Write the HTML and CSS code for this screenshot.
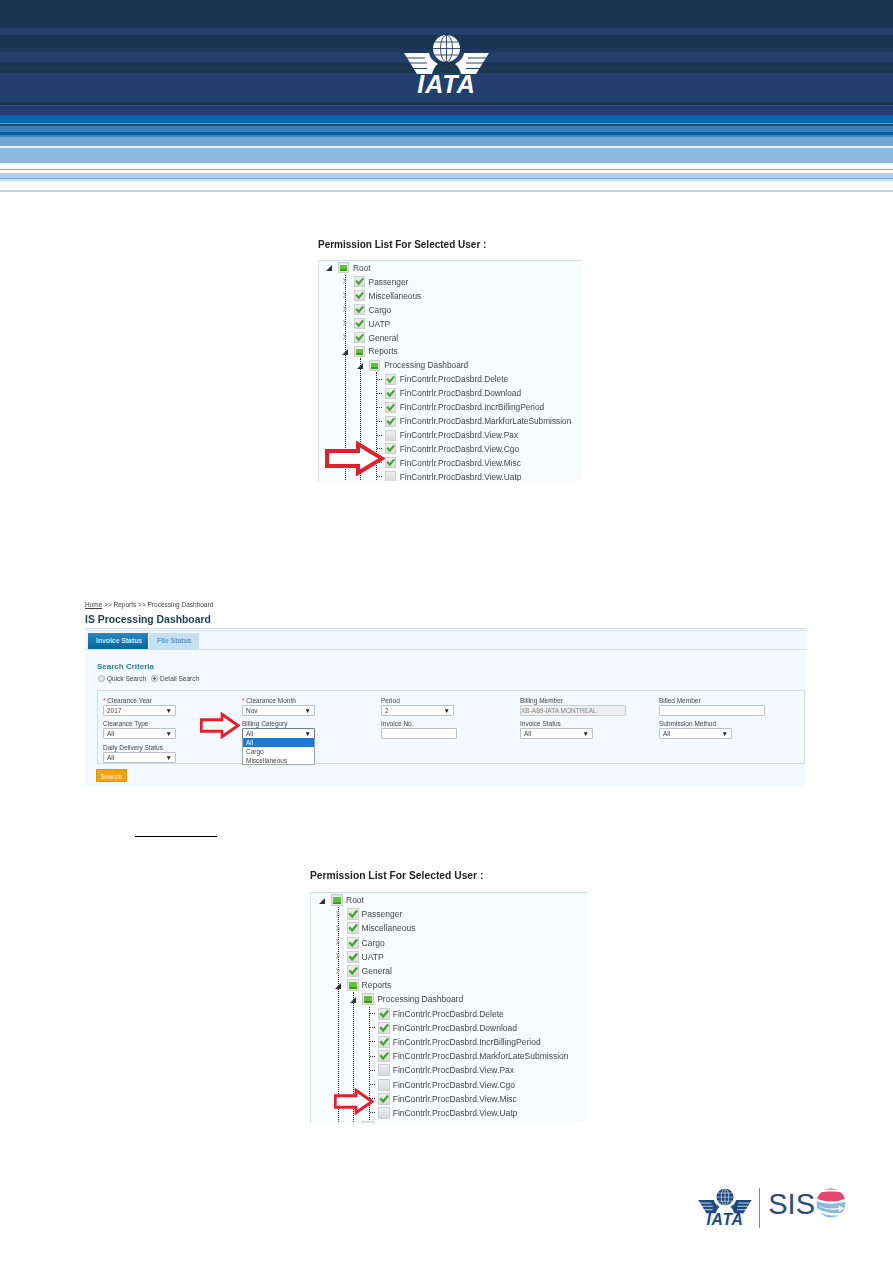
FILE: index.html
```html
<!DOCTYPE html>
<html lang="en">
<head>
<meta charset="utf-8">
<title>IS Processing Dashboard permissions</title>
<link rel="stylesheet" href="styles.css">
</head>
<body>
<svg class="sprite" aria-hidden="true">
  <symbol id="iata" viewBox="0 0 89 66">
    <circle class="lg-fill" cx="44.5" cy="14.5" r="13.5"/>
    <g class="lg-line">
      <ellipse cx="44.5" cy="14.5" rx="6" ry="13.5"/>
      <path d="M44.500 1V28M32.500 8H56.500M31 14.500H58M32.500 21H56.500"/>
    </g>
    <g id="wing">
      <path class="lg-fill" d="M2 19H27C28 24 31 27 36 30C33 32 31 36 30 40H15Z"/>
      <path class="lg-cut" d="M2 24H23M5 29H25M9 34.500H25"/>
    </g>
    <use href="#wing" transform="matrix(-1 0 0 1 89 0)"/>
    <text class="lg-word" x="44.500" y="59" text-anchor="middle">IATA</text>
  </symbol>
  <symbol id="tick" viewBox="0 0 12 12">
    <path d="M1.500 5L5 9L11 1.800" fill="none" stroke="#3fa52c" stroke-width="2.800"/>
  </symbol>
  <symbol id="arrow" viewBox="0 0 60 35" preserveAspectRatio="none">
    <path d="M2 10H33V3L57 17.500L33 32V25H2Z" fill="#fff" stroke="#e2202c" stroke-width="4"/>
  </symbol>
</svg>

<header class="banner">
  <svg class="logo-top"><use href="#iata"/></svg>
</header>

<main>
  <figure class="perm perm-a">
    <figcaption class="perm-title">Permission List For Selected User :</figcaption>
    <div class="tree">
      <ul class="tree-root">
        <li><div class="row"><span class="tog open"></span><span class="cb part"></span><span>Root</span></div>
          <ul>
            <li><div class="row"><span class="tog"></span><span class="cb"><svg><use href="#tick"/></svg></span><span>Passenger</span></div></li>
            <li><div class="row"><span class="tog"></span><span class="cb"><svg><use href="#tick"/></svg></span><span>Miscellaneous</span></div></li>
            <li><div class="row"><span class="tog"></span><span class="cb"><svg><use href="#tick"/></svg></span><span>Cargo</span></div></li>
            <li><div class="row"><span class="tog"></span><span class="cb"><svg><use href="#tick"/></svg></span><span>UATP</span></div></li>
            <li><div class="row"><span class="tog"></span><span class="cb"><svg><use href="#tick"/></svg></span><span>General</span></div></li>
            <li><div class="row"><span class="tog open"></span><span class="cb part"></span><span>Reports</span></div>
              <ul>
                <li><div class="row"><span class="tog open"></span><span class="cb part"></span><span>Processing Dashboard</span></div>
                  <ul>
                    <li><div class="row"><span class="tog leaf"></span><span class="cb"><svg><use href="#tick"/></svg></span><span>FinContrlr.ProcDasbrd.Delete</span></div></li>
                    <li><div class="row"><span class="tog leaf"></span><span class="cb"><svg><use href="#tick"/></svg></span><span>FinContrlr.ProcDasbrd.Download</span></div></li>
                    <li><div class="row"><span class="tog leaf"></span><span class="cb"><svg><use href="#tick"/></svg></span><span>FinContrlr.ProcDasbrd.IncrBillingPeriod</span></div></li>
                    <li><div class="row"><span class="tog leaf"></span><span class="cb"><svg><use href="#tick"/></svg></span><span>FinContrlr.ProcDasbrd.MarkforLateSubmission</span></div></li>
                    <li><div class="row"><span class="tog leaf"></span><span class="cb"></span><span>FinContrlr.ProcDasbrd.View.Pax</span></div></li>
                    <li><div class="row"><span class="tog leaf"></span><span class="cb"><svg><use href="#tick"/></svg></span><span>FinContrlr.ProcDasbrd.View.Cgo</span></div></li>
                    <li><div class="row"><span class="tog leaf"></span><span class="cb"><svg><use href="#tick"/></svg></span><span>FinContrlr.ProcDasbrd.View.Misc</span></div></li>
                    <li><div class="row"><span class="tog leaf"></span><span class="cb"></span><span>FinContrlr.ProcDasbrd.View.Uatp</span></div></li>
                  </ul>
                </li>
              </ul>
            </li>
          </ul>
        </li>
      </ul>
      <svg class="callout callout-a"><use href="#arrow"/></svg>
    </div>
  </figure>

  <section class="dash">
    <p class="crumbs"><span class="crumb-home">Home</span> &gt;&gt; Reports &gt;&gt; Processing Dashboard</p>
    <h1 class="dash-title">IS Processing Dashboard</h1>
    <div class="dash-panel">
      <div class="tabs">
        <span class="tab tab-on">Invoice Status</span>
        <span class="tab">File Status</span>
      </div>
      <h2 class="criteria">Search Criteria</h2>
      <div class="radios">
        <span class="radio"></span><span class="radio-label">Quick Search</span>
        <span class="radio radio-on"></span><span>Detail Search</span>
      </div>
      <div class="fields">
        <div class="field"><label><em>*</em> Clearance Year</label><div class="select"><span>2017</span><i>▼</i></div></div>
        <div class="field"><label><em>*</em> Clearance Month</label><div class="select"><span>Nov</span><i>▼</i></div></div>
        <div class="field"><label>Period</label><div class="select"><span>2</span><i>▼</i></div></div>
        <div class="field"><label>Billing Member</label><div class="input input-off">XB-A89-IATA MONTREAL</div></div>
        <div class="field"><label>Billed Member</label><div class="input"></div></div>

        <div class="field"><label>Clearance Type</label><div class="select"><span>All</span><i>▼</i></div></div>
        <div class="field field-open"><label>Billing Category</label><div class="select select-open"><span>All</span><i>▼</i></div>
          <ul class="menu">
            <li class="menu-on">All</li>
            <li>Cargo</li>
            <li>Miscellaneous</li>
          </ul>
        </div>
        <div class="field"><label>Invoice No.</label><div class="input input-short"></div></div>
        <div class="field"><label>Invoice Status</label><div class="select"><span>All</span><i>▼</i></div></div>
        <div class="field"><label>Submission Method</label><div class="select"><span>All</span><i>▼</i></div></div>

        <div class="field"><label>Daily Delivery Status</label><div class="select"><span>All</span><i>▼</i></div></div>
      </div>
      <span class="search-btn">Search</span>
    </div>
    <svg class="callout callout-b"><use href="#arrow"/></svg>
  </section>

  <div class="rule"></div>

  <figure class="perm perm-b">
    <figcaption class="perm-title">Permission List For Selected User :</figcaption>
    <div class="tree">
      <ul class="tree-root">
        <li><div class="row"><span class="tog open"></span><span class="cb part"></span><span>Root</span></div>
          <ul>
            <li><div class="row"><span class="tog"></span><span class="cb"><svg><use href="#tick"/></svg></span><span>Passenger</span></div></li>
            <li><div class="row"><span class="tog"></span><span class="cb"><svg><use href="#tick"/></svg></span><span>Miscellaneous</span></div></li>
            <li><div class="row"><span class="tog"></span><span class="cb"><svg><use href="#tick"/></svg></span><span>Cargo</span></div></li>
            <li><div class="row"><span class="tog"></span><span class="cb"><svg><use href="#tick"/></svg></span><span>UATP</span></div></li>
            <li><div class="row"><span class="tog"></span><span class="cb"><svg><use href="#tick"/></svg></span><span>General</span></div></li>
            <li><div class="row"><span class="tog open"></span><span class="cb part"></span><span>Reports</span></div>
              <ul>
                <li><div class="row"><span class="tog open"></span><span class="cb part"></span><span>Processing Dashboard</span></div>
                  <ul>
                    <li><div class="row"><span class="tog leaf"></span><span class="cb"><svg><use href="#tick"/></svg></span><span>FinContrlr.ProcDasbrd.Delete</span></div></li>
                    <li><div class="row"><span class="tog leaf"></span><span class="cb"><svg><use href="#tick"/></svg></span><span>FinContrlr.ProcDasbrd.Download</span></div></li>
                    <li><div class="row"><span class="tog leaf"></span><span class="cb"><svg><use href="#tick"/></svg></span><span>FinContrlr.ProcDasbrd.IncrBillingPeriod</span></div></li>
                    <li><div class="row"><span class="tog leaf"></span><span class="cb"><svg><use href="#tick"/></svg></span><span>FinContrlr.ProcDasbrd.MarkforLateSubmission</span></div></li>
                    <li><div class="row"><span class="tog leaf"></span><span class="cb"></span><span>FinContrlr.ProcDasbrd.View.Pax</span></div></li>
                    <li><div class="row"><span class="tog leaf"></span><span class="cb"></span><span>FinContrlr.ProcDasbrd.View.Cgo</span></div></li>
                    <li><div class="row"><span class="tog leaf"></span><span class="cb"><svg><use href="#tick"/></svg></span><span>FinContrlr.ProcDasbrd.View.Misc</span></div></li>
                    <li><div class="row"><span class="tog leaf"></span><span class="cb"></span><span>FinContrlr.ProcDasbrd.View.Uatp</span></div></li>
                  </ul>
                </li>
                <li><div class="row"><span class="tog"></span><span class="cb"></span></div></li>
              </ul>
            </li>
          </ul>
        </li>
      </ul>
      <svg class="callout callout-c"><use href="#arrow"/></svg>
    </div>
  </figure>
</main>

<footer class="foot">
  <svg class="logo-foot"><use href="#iata"/></svg>
  <span class="foot-bar"></span>
  <span class="foot-sis">SIS</span>
  <svg class="sis-globe" viewBox="0 0 30 31">
    <defs><clipPath id="ball"><circle cx="15" cy="15.500" r="15"/></clipPath></defs>
    <g clip-path="url(#ball)">
      <path d="M0 3C8 1 22 1 30 3V0H0Z" fill="#e5476e"/>
      <path d="M0 5.500C9 3 21 3 30 5.500V11C21 14.500 9 14.500 0 11Z" fill="#e5476e"/>
      <path d="M0 13.500C9 17 20 17 30 14V25C20 27.500 9 26 0 21Z" fill="#8db9dc"/>
      <path d="M0 24C9 28.500 20 29.500 30 27V31H0Z" fill="#8db9dc"/>
      <path d="M3 18.500C10 21.500 17 21.500 23 20.500V18L29 21L23 24.500V22C17 23 10 22.500 3 19.500Z" fill="#fff"/>
    </g>
  </svg>
</footer>
</body>
</html>
```

FILE: styles.css
```css
* { box-sizing: border-box; }

html, body {
  margin: 0;
  padding: 0;
  background: #fff;
}

body {
  width: 893px;
  height: 1263px;
  overflow: hidden;
  font-family: "Liberation Sans", Arial, sans-serif;
  color: #333;
}

.sprite {
  position: absolute;
  width: 0;
  height: 0;
}

.lg-fill { fill: var(--logo-fg); }
.lg-line { fill: none; stroke: var(--logo-bg); stroke-width: 0.9; }
.lg-cut { fill: none; stroke: var(--logo-bg); stroke-width: 1.2; }
.lg-word {
  fill: var(--logo-fg);
  font-family: "Liberation Sans", Arial, sans-serif;
  font-weight: 700;
  font-style: italic;
  font-size: 25px;
  letter-spacing: 1px;
}

/* Banner */
.banner {
  display: flex;
  justify-content: center;
  height: 192px;
  padding-top: 34px;
  background: linear-gradient(to bottom,
    #1a3553 0 28px,
    #223f6d 28px 35px,
    #1a3553 35px 49px,
    #1d3a5e 49px 52px,
    #223f6d 52px 62px,
    #1a3553 62px 65px,
    #1b3850 65px 73px,
    #223f6d 73px 102px,
    #1a3553 102px 105px,
    #0f5e94 105px 106px,
    #223f6d 106px 115px,
    #0068a8 115px 123px,
    #5aa3d6 123px 124px,
    #1a4a78 124px 126px,
    #3a82bd 126px 132px,
    #0064a8 132px 135px,
    #3b84bd 135px 137px,
    #74a5d2 137px 146px,
    #e8f1f8 146px 148px,
    #8ab9dd 148px 163px,
    #fff 163px 169px,
    #7fa8d0 169px 170px,
    #fff 170px 173px,
    #b0d0ec 173px 178px,
    #7fa8d0 178px 179px,
    #cde0f1 179px 181px,
    #fff 181px 190px,
    #b8d4ec 190px 192px);
}

.logo-top {
  width: 89px;
  height: 66px;
  --logo-fg: #fff;
  --logo-bg: #223f6d;
}

/* Permission trees */
.perm {
  position: relative;
  margin: 0;
}

.perm-a {
  --row: 13.93px;
  --cb: 11px;
  --cb-gap: 4px;
  margin: 47px 0 0 318px;
  width: 264px;
  font-size: 8.3px;
}

.perm-b {
  --row: 14.2px;
  --cb: 12px;
  --cb-gap: 3px;
  margin: 33px 0 0 310px;
  width: 277px;
  font-size: 8.5px;
}

.perm-title {
  height: 12px;
  font-size: 10px;
  font-weight: 700;
  line-height: 12px;
  color: #222;
  filter: blur(0.25px);
}

.perm-a .perm-title { margin-bottom: 9px; }
.perm-b .perm-title { margin-bottom: 10px; font-size: 10.300px; }

.tree {
  position: relative;
  overflow: hidden;
  padding: 0 0 0 5px;
  background: #f8fcfe;
  border-top: 1px solid #cfe0ea;
  border-left: 1px solid #cfe0ea;
  color: #444;
}

.perm-a .tree { height: 221px; }
.perm-b .tree { height: 231px; padding-left: 6px; }

.tree ul {
  margin: 0 0 0 20.600px;
  padding: 0;
  list-style: none;
  border-left: 1px dotted #222;
}

.tree ul.tree-root {
  margin: 0;
  border: 0;
}

.tree ul li { margin-left: -6px; }
.tree ul.tree-root > li { margin-left: 0; }

.row {
  display: flex;
  align-items: center;
  height: var(--row);
  white-space: nowrap;
  filter: blur(0.25px);
}

.tog {
  position: relative;
  flex: none;
  width: 10px;
  height: 7px;
  margin-right: 4px;
}

.tog::before,
.tog::after {
  content: "";
  position: absolute;
  border-style: solid;
  border-color: transparent transparent transparent #999;
}

.tog::before {
  left: 3px;
  top: 0;
  border-width: 3.500px 0 3.500px 4px;
}

.tog::after {
  left: 3.500px;
  top: 1px;
  border-width: 2.500px 0 2.500px 2.500px;
  border-left-color: #fff;
}

.tog.open::before {
  left: 2px;
  top: 1px;
  border-width: 0 0 6px 6px;
  border-color: transparent transparent #333 transparent;
}

.tog.open::after,
.tog.leaf::after { display: none; }

.tog.leaf::before {
  left: 6px;
  top: 3px;
  width: 5px;
  border: 0;
  border-top: 1px dotted #333;
}

.cb {
  display: block;
  flex: none;
  width: var(--cb);
  height: var(--cb);
  margin-right: var(--cb-gap);
  background: linear-gradient(#efefef, #d9d9d9);
  border: 1px solid #cfcfcf;
}

.cb svg {
  display: block;
  width: 100%;
  height: 100%;
  overflow: visible;
}

.cb.part {
  padding: 1px;
  background: linear-gradient(#eaf5e5 0 15%, #62c23c 15% 75%, #36a01c 75%) content-box, #e4e4e4;
}

/* Dashboard capture */
.dash {
  position: relative;
  width: 721px;
  height: 186px;
  margin: 119px 0 0 85px;
  font-size: 6.500px;
  color: #444;
}

.crumbs {
  margin: 0;
  height: 9px;
  line-height: 9px;
  filter: blur(0.2px);
}

.crumb-home { text-decoration: underline; }

.dash-title {
  margin: 4px 0 0;
  height: 14px;
  font-size: 10.400px;
  font-weight: 700;
  line-height: 13px;
  color: #1d3d52;
  filter: blur(0.2px);
}

.dash-panel {
  height: 159px;
  margin-top: 1px;
  padding: 0 2px 0 3px;
  background: #f3f9fd;
  border-top: 1px solid #cfe0ea;
}

.tabs {
  display: flex;
  gap: 1px;
  height: 20px;
  margin: 1px -2px 0 -3px;
  padding: 2px 0 0 3px;
  background: #f1f8fc;
  border-top: 1px solid #d8e7f0;
  border-bottom: 1px solid #cfe0ea;
}

.tab {
  padding: 0 8px;
  font-size: 6.800px;
  font-weight: 700;
  line-height: 15px;
  white-space: nowrap;
  color: #5a9cc4;
  background: #c5e0f0;
}

.tab-on {
  width: 60px;
  color: #cfe5f2;
  background: linear-gradient(#2a88bd, #05669f);
}

.criteria {
  margin: 12px 0 0 9px;
  height: 10px;
  font-size: 8px;
  font-weight: 700;
  line-height: 10px;
  color: #2d7ea3;
  filter: blur(0.2px);
}

.radios {
  display: flex;
  align-items: center;
  gap: 2px;
  height: 12px;
  margin: 0 0 0 10px;
  filter: blur(0.2px);
}

.radio {
  width: 7px;
  height: 7px;
  border: 1px solid #aaa;
  border-radius: 50%;
  background: #e8e8e8;
}

.radio-on { background: radial-gradient(#666 0 35%, #e8e8e8 40%); }
.radio-label { margin-right: 3px; }

.fields {
  display: grid;
  grid-template-columns: repeat(5, 139px);
  row-gap: 3px;
  height: 74px;
  margin: 6px 0 0 9px;
  width: 708px;
  padding: 5px 0 0 5px;
  border: 1px solid #cbdde6;
}

.field {
  position: relative;
  filter: blur(0.2px);
}

.field label {
  display: block;
  height: 9px;
  line-height: 9px;
}

.field em {
  font-style: normal;
  color: #d33;
}

.select, .input {
  display: flex;
  align-items: center;
  justify-content: space-between;
  width: 73px;
  height: 11px;
  padding: 0 3px;
  background: #fff;
  border: 1px solid #b8c2c8;
  border-radius: 1px;
  line-height: 9px;
}

.select i {
  font-size: 6.500px;
  font-style: normal;
  line-height: 7px;
  color: #222;
}

.input { width: 106px; }
.input-short { width: 76px; }

.input-off {
  color: #888;
  background: #eee;
  border-color: #ccc;
  padding-left: 0;
}

.select-open { border-color: #6a7f90; }

.menu {
  position: absolute;
  top: 19px;
  left: 0;
  z-index: 2;
  width: 73px;
  height: 27px;
  margin: 0;
  padding: 0;
  list-style: none;
  background: #fff;
  border: 1px solid #9aa6b0;
  border-top: 0;
  line-height: 9px;
}

.menu li { padding-left: 3px; }

.menu-on {
  color: #fff;
  background: #1c79d4;
}

.search-btn {
  display: block;
  width: 31px;
  height: 13px;
  margin: 5px 0 0 8px;
  font-size: 6.500px;
  font-weight: 700;
  line-height: 13px;
  text-align: center;
  color: #ffe6a8;
  background: #f0a20f;
  border: 1px solid #e09608;
}

.callout {
  position: absolute;
  z-index: 3;
  display: block;
}

.callout-a { left: 6px; top: 180px; width: 60px; height: 35px; }
.callout-b { left: 115px; top: 112px; width: 40px; height: 27px; }
.callout-c { left: 23px; top: 195px; width: 40px; height: 27px; }

/* Underline */
.rule {
  width: 82px;
  height: 1px;
  margin: 50px 0 0 135px;
  background: #000;
}

/* Footer */
.foot {
  display: flex;
  align-items: flex-start;
  justify-content: flex-end;
  height: 42px;
  margin-top: 65px;
  padding-right: 47px;
}

.logo-foot {
  flex: none;
  width: 56px;
  height: 41.500px;
  --logo-fg: #1c4a80;
  --logo-bg: #fff;
}

.foot-bar {
  flex: none;
  width: 1px;
  height: 40px;
  margin: 0 8px 0 6px;
  background: #5b8fd0;
}

.foot-sis {
  flex: none;
  font-size: 29px;
  line-height: 32px;
  color: #2d4a7c;
}

.sis-globe {
  flex: none;
  width: 30px;
  height: 30px;
  margin-left: 1px;
}
```
